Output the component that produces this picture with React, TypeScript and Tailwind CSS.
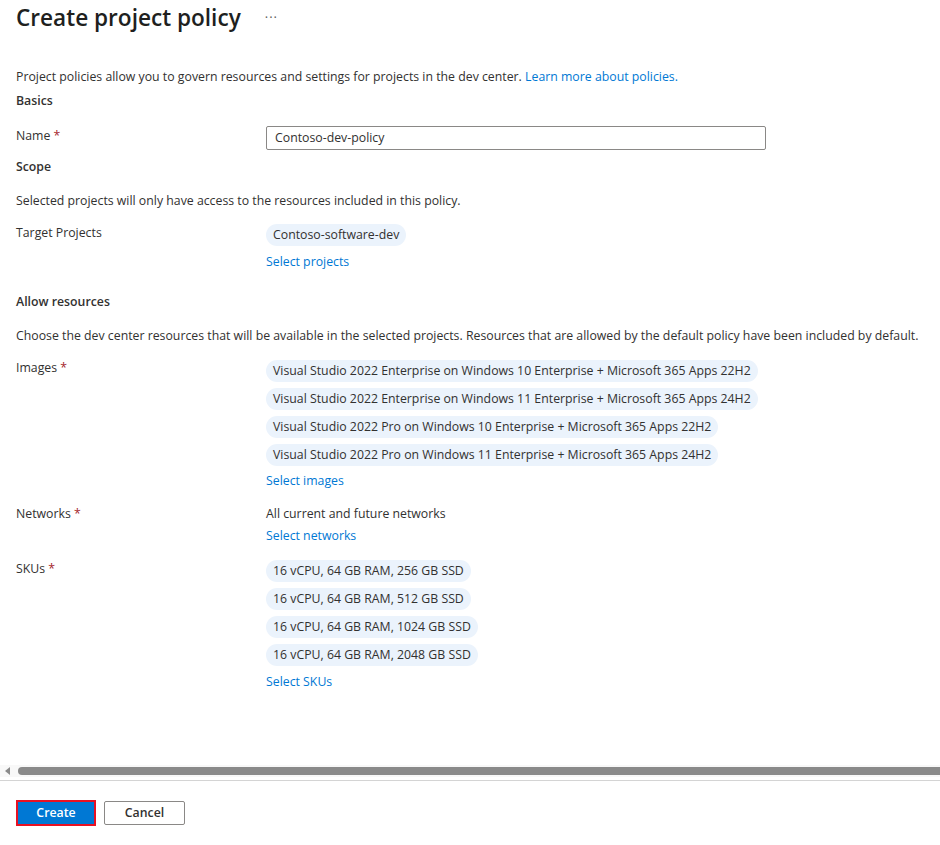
const images = [
  'Visual Studio 2022 Enterprise on Windows 10 Enterprise + Microsoft 365 Apps 22H2',
  'Visual Studio 2022 Enterprise on Windows 11 Enterprise + Microsoft 365 Apps 24H2',
  'Visual Studio 2022 Pro on Windows 10 Enterprise + Microsoft 365 Apps 22H2',
  'Visual Studio 2022 Pro on Windows 11 Enterprise + Microsoft 365 Apps 24H2',
];

const skus = [
  '16 vCPU, 64 GB RAM, 256 GB SSD',
  '16 vCPU, 64 GB RAM, 512 GB SSD',
  '16 vCPU, 64 GB RAM, 1024 GB SSD',
  '16 vCPU, 64 GB RAM, 2048 GB SSD',
];

const Pill = ({ children }: { children: React.ReactNode }) => (
  <div className="self-start h-[22px] flex items-center px-[7px] rounded-full bg-[#ebf3fc] text-[#323130] whitespace-nowrap">
    {children}
  </div>
);

const Label = ({ text, required }: { text: string; required?: boolean }) => (
  <div className="w-[250px] shrink-0 leading-[20px]">
    {text}
    {required && <span className="text-[#a4262c]"> *</span>}
  </div>
);

const Link = ({ children }: { children: React.ReactNode }) => (
  <a className="text-[#0078d4] cursor-pointer leading-[20px]">{children}</a>
);

export default function App() {
  return (
    <div
      className="w-[940px] h-[845px] bg-white text-[#323130] text-[12.3px] flex flex-col overflow-hidden"
      style={{ fontFamily: "'Open Sans', 'Noto Sans', sans-serif" }}
    >
      <div className="flex-1 px-4 overflow-hidden">
        {/* header */}
        <div className="flex items-center h-[36px]">
          <h1 className="text-[22.6px] font-semibold text-[#201f1e]">Create project policy</h1>
          <span className="ml-[24px] text-[#605e5c] text-[13px] tracking-[1px]">···</span>
        </div>

        <p className="mt-[31px] leading-[20px]">
          Project policies allow you to govern resources and settings for projects in the dev center.{' '}
          <Link>Learn more about policies.</Link>
        </p>
        <h2 className="font-semibold leading-[20px] mt-[4px]">Basics</h2>

        <div className="flex mt-[15px]">
          <Label text="Name" required />
          <div className="w-[500px] h-[24px] border border-[#8a8886] rounded-[2px] flex items-center px-[8px]">
            Contoso-dev-policy
          </div>
        </div>

        <h2 className="font-semibold leading-[20px] mt-[7px]">Scope</h2>
        <p className="leading-[20px] mt-[14px]">Selected projects will only have access to the resources included in this policy.</p>

        <div className="flex mt-[12px]">
          <Label text="Target Projects" />
          <div className="flex flex-col">
            <div className="mt-[1px]">
              <Pill>Contoso-software-dev</Pill>
            </div>
            <div className="mt-[6px]">
              <Link>Select projects</Link>
            </div>
          </div>
        </div>

        <h2 className="font-semibold leading-[20px] mt-[20px]">Allow resources</h2>
        <p className="leading-[20px] mt-[14px]">
          Choose the dev center resources that will be available in the selected projects. Resources that are allowed by the default policy have been included by default.
        </p>

        <div className="flex mt-[12px]">
          <Label text="Images" required />
          <div className="flex flex-col gap-[6px] mt-[2px]">
            {images.map((img) => (
              <Pill key={img}>{img}</Pill>
            ))}
            <div className="-mt-[1px]">
              <Link>Select images</Link>
            </div>
          </div>
        </div>

        <div className="flex mt-[13px]">
          <Label text="Networks" required />
          <div className="flex flex-col">
            <span className="leading-[20px]">All current and future networks</span>
            <div className="mt-[2px]">
              <Link>Select networks</Link>
            </div>
          </div>
        </div>

        <div className="flex mt-[13px]">
          <Label text="SKUs" required />
          <div className="flex flex-col gap-[6px] mt-[1px]">
            {skus.map((s) => (
              <Pill key={s}>{s}</Pill>
            ))}
            <div className="mt-0">
              <Link>Select SKUs</Link>
            </div>
          </div>
        </div>
      </div>

      {/* horizontal scrollbar */}
      <div className="h-[12px] bg-[#f8f8f8] flex items-center">
        <svg width="12" height="12" viewBox="0 0 12 12" className="shrink-0 ml-[2px]">
          <path d="M8 2 L3 6 L8 10 Z" fill="#8a8a8a" />
        </svg>
        <div className="flex-1 h-[8px] bg-[#8a8a8a] rounded-l-full ml-[4px]" />
      </div>
      <div className="h-[1px] bg-[#d4d4d4] mt-[3px]" />

      {/* footer */}
      <div className="h-[64px] flex items-center gap-[8px] px-4 pt-[1px] pb-[1px]">
        <button className="w-[80px] h-[26px] border-2 border-[#e81123] bg-[#0078d4] text-white font-semibold text-[12.3px]">
          Create
        </button>
        <button className="w-[81px] h-[24px] border border-[#8a8886] rounded-[2px] bg-white text-[#323130] font-semibold text-[12.3px]">
          Cancel
        </button>
      </div>
    </div>
  );
}
